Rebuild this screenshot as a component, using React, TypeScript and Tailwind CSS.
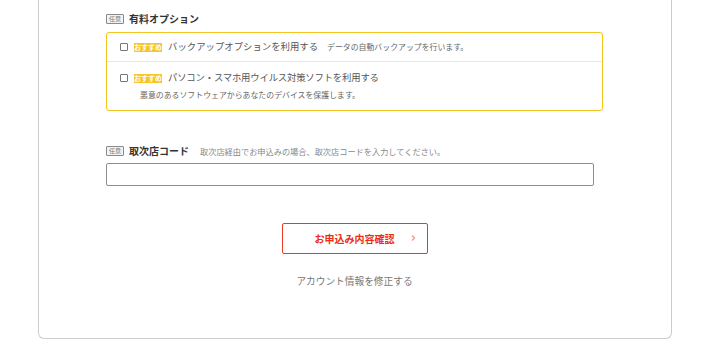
const font = { fontFamily: '"Noto Sans CJK JP", "Noto Sans", sans-serif' };

function OptionalBadge() {
  return (
    <span className="inline-flex h-[10px] w-[18px] items-center justify-center rounded-[1px] border border-[#8a8a8a] bg-[#f3f3f3] text-[6px] leading-none text-[#777]">
      任意
    </span>
  );
}

function RecommendBadge() {
  return (
    <span className="ml-[6px] flex h-[9px] w-[28px] shrink-0 items-center justify-center bg-[#f8c62a] text-[7px] font-bold leading-none text-white">
      おすすめ
    </span>
  );
}

function Checkbox() {
  return <span className="block size-[8px] shrink-0 rounded-[1px] border border-[#777] bg-white" />;
}

export default function App() {
  return (
    <div className="min-h-[353px] w-full bg-white" style={font}>
      <div className="ml-[38px] w-[634px] rounded-b-[6px] border-x border-b border-[#cccccc] pl-[67px] pr-[68px] pb-[50px] pt-[12px]">
        <div className="flex items-center gap-[5px]">
          <OptionalBadge />
          <span className="text-[10px] font-bold leading-[14px] text-[#333]">有料オプション</span>
        </div>

        <div className="mt-[6px] rounded-[3px] border border-[#f5c523]">
          <div className="flex h-[29px] items-center border-b border-[#e6e6e6] pl-[13px]">
            <Checkbox />
            <RecommendBadge />
            <span className="ml-[6px] text-[9.4px] leading-none text-[#555]">バックアップオプションを利用する</span>
            <span className="ml-[9px] text-[7.9px] leading-none text-[#666]">データの自動バックアップを行います。</span>
          </div>
          <div className="pl-[13px] pt-[11px] pb-[11px]">
            <div className="flex h-[10px] items-center">
              <Checkbox />
              <RecommendBadge />
              <span className="ml-[6px] text-[9.4px] leading-none tracking-[-0.2px] text-[#555]">パソコン・スマホ用ウイルス対策ソフトを利用する</span>
            </div>
            <div className="ml-[20px] mt-[8px] text-[7.9px] leading-none text-[#666]">
              悪意のあるソフトウェアからあなたのデバイスを保護します。
            </div>
          </div>
        </div>

        <div className="mt-[33px] flex items-center gap-[5px]">
          <OptionalBadge />
          <span className="text-[10px] font-bold leading-[14px] text-[#333]">取次店コード</span>
          <span className="ml-[6px] text-[8.2px] leading-none text-[#888]">
            取次店経由でお申込みの場合、取次店コードを入力してください。
          </span>
        </div>

        <input
          type="text"
          className="mt-[5px] block h-[23px] w-[488px] rounded-[2px] border border-[#8e8e8e] bg-white px-2 text-[10px] outline-none"
        />

        <div className="mt-[37px] flex justify-center">
          <button
            type="button"
            className="relative flex h-[31px] w-[146px] items-center justify-center rounded-[2px] border border-[#ea3a20] bg-white text-[10px] font-bold text-[#ee2c14]"
          >
            お申込み内容確認
            <svg
              className="absolute right-[11px] top-1/2 -translate-y-1/2"
              width="5"
              height="7"
              viewBox="0 0 5 7"
              fill="none"
            >
              <path d="M1 1l2.5 2.5L1 6" stroke="#f39a8c" strokeWidth="1.3" />
            </svg>
          </button>
        </div>

        <div className="mt-[20px] text-center text-[9.7px] leading-[14px] text-[#777]">アカウント情報を修正する</div>
      </div>
    </div>
  );
}
